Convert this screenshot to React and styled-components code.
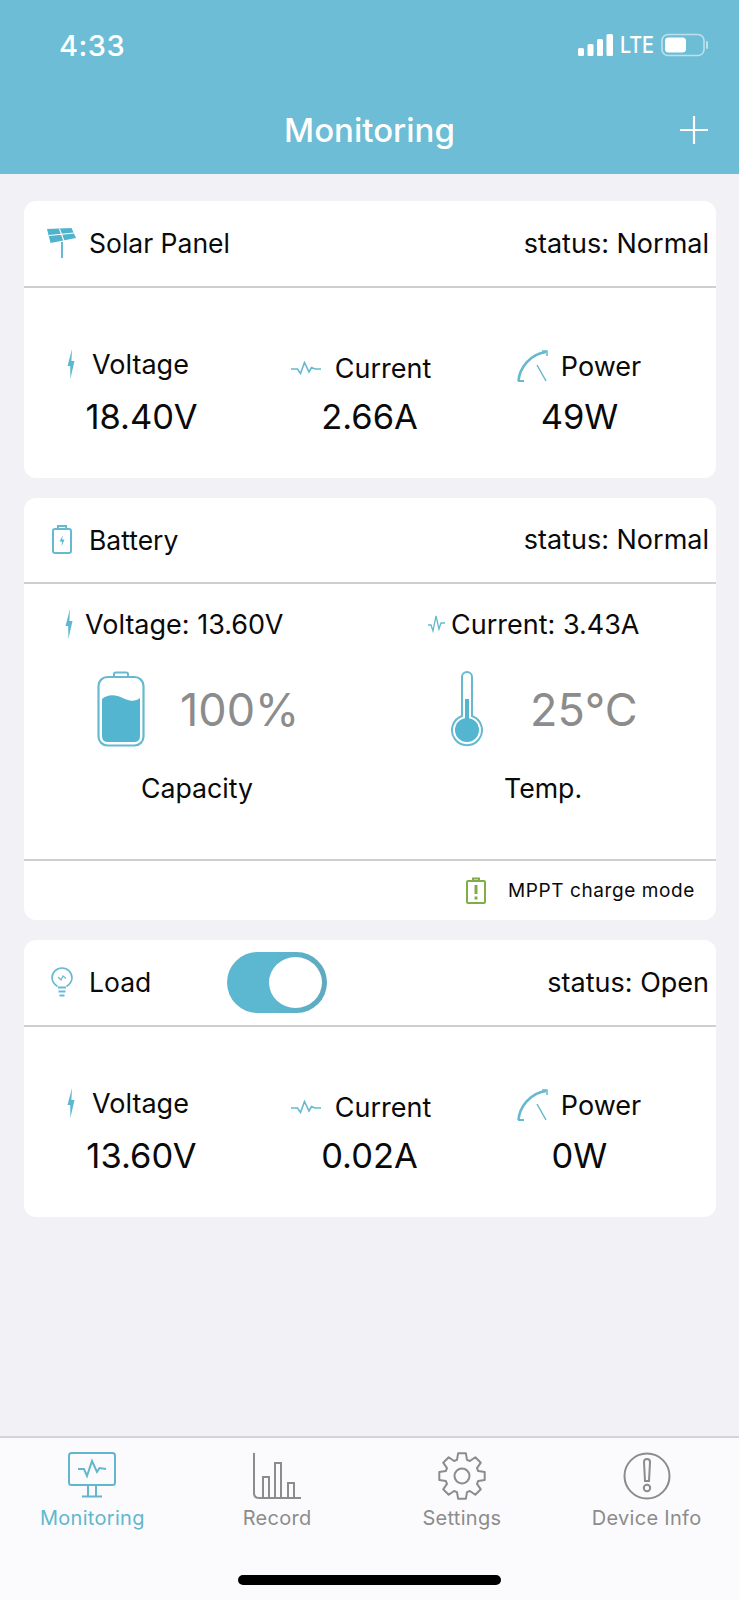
import styled, { createGlobalStyle } from "styled-components";

const TEAL = "#5cb8d0";
const ICON_LINE = "#66b9cf";
const GRAY = "#8c8c8c";

const GlobalStyle = createGlobalStyle`
  html, body {
    margin: 0;
    padding: 0;
    background: #f1f1f6;
  }
  * {
    box-sizing: border-box;
  }
`;

const Screen = styled.div`
  width: 739px;
  height: 1600px;
  display: flex;
  flex-direction: column;
  background: #f1f1f6;
  color: #0a0a0a;
  font-family: Inter, "Noto Sans", sans-serif;
  overflow: hidden;
`;

const Header = styled.header`
  height: 174px;
  flex: none;
  background: #6cbdd5;
  color: #fff;
`;

const StatusBar = styled.div`
  height: 92px;
  padding: 0 30px 2px 59px;
  display: flex;
  align-items: center;
  justify-content: space-between;
`;

const Clock = styled.span`
  font-size: 29px;
  font-weight: 500;
  letter-spacing: 0.5px;
`;

const StatusIcons = styled.div`
  display: flex;
  align-items: center;
  gap: 6px;
`;

const Network = styled.span`
  font-size: 23px;
  font-weight: 500;
  letter-spacing: -0.2px;
  transform: scaleX(0.86);
  transform-origin: left center;
  margin-right: -4px;
`;

const NavBar = styled.div`
  height: 76px;
  padding: 0 30px;
  display: grid;
  grid-template-columns: 1fr auto 1fr;
  align-items: center;
`;

const NavTitle = styled.h1`
  grid-column: 2;
  margin: 0;
  font-size: 33px;
  font-weight: 500;
`;

const AddButton = styled.div`
  grid-column: 3;
  justify-self: end;
  display: flex;
`;

const Content = styled.main`
  flex: 1;
  padding: 27px 23px 0 24px;
  display: flex;
  flex-direction: column;
  gap: 20px;
`;

const Card = styled.section`
  background: #fff;
  border-radius: 12px;
  height: ${(p) => p.$height}px;
  display: flex;
  flex-direction: column;
`;

const CardHead = styled.div`
  height: ${(p) => p.$height}px;
  flex: none;
  padding: 0 7px 1px 20px;
  display: flex;
  align-items: center;
  border-bottom: 2px solid #cfcfd1;
`;

const IconSlot = styled.div`
  width: 36px;
  margin-right: 9px;
  display: flex;
  justify-content: center;
`;

const CardTitle = styled.span`
  font-size: 26.5px;
`;

const Status = styled.span`
  margin-left: auto;
  font-size: 27px;
`;

const Toggle = styled.div`
  width: 100px;
  height: 61px;
  margin-left: 76px;
  padding: 5px;
  border-radius: 31px;
  display: flex;
  justify-content: flex-end;
  background: linear-gradient(90deg, ${TEAL} 45%, #5fa9bf 100%);
`;

const Knob = styled.div`
  width: 53px;
  height: 51px;
  border-radius: 50%;
  background: #fff;
`;

const MetricGrid = styled.div`
  padding-top: 54px;
  display: grid;
  grid-template-columns: 234px 222px 198px;
`;

const Metric = styled.div`
  display: flex;
  flex-direction: column;
  align-items: center;
`;

const MetricLabel = styled.div`
  height: 44px;
  padding-top: ${(p) => p.$drop}px;
  margin-left: ${(p) => p.$shift}px;
  display: flex;
  align-items: center;
  gap: ${(p) => p.$gap}px;
  font-size: 27px;
`;

const MetricValue = styled.div`
  margin-top: 9px;
  margin-left: 1px;
  font-size: 34.5px;
  line-height: 44px;
`;

const BatteryGrid = styled.div`
  flex: 1;
  display: grid;
  grid-template-columns: 1fr 1fr;
`;

const BatteryColumn = styled.div`
  padding-top: 20px;
  display: flex;
  flex-direction: column;
`;

const Reading = styled.div`
  height: 40px;
  padding-left: ${(p) => p.$indent}px;
  display: flex;
  align-items: center;
  gap: ${(p) => p.$gap}px;
  font-size: 27px;
`;

const Gauge = styled.div`
  margin-top: 27px;
  padding-left: ${(p) => p.$indent}px;
  display: flex;
  align-items: center;
  gap: ${(p) => p.$gap}px;
`;

const GaugeValue = styled.span`
  font-size: 45px;
  color: ${GRAY};
`;

const Caption = styled.div`
  margin-top: 22px;
  padding-left: ${(p) => p.$indent}px;
  font-size: 26.7px;
  line-height: 38px;
`;

const ChargeMode = styled.div`
  height: 61px;
  flex: none;
  padding-right: 21px;
  display: flex;
  align-items: center;
  justify-content: flex-end;
  gap: 22px;
  border-top: 2px solid #cfcfd1;
  font-size: 19px;
  letter-spacing: 0.6px;
`;

const TabBar = styled.nav`
  height: 164px;
  flex: none;
  display: flex;
  flex-direction: column;
  background: #fbfbfd;
  border-top: 2px solid #d4d4d6;
`;

const Tabs = styled.div`
  padding-top: 14px;
  display: grid;
  grid-template-columns: repeat(4, 1fr);
`;

const Tab = styled.div`
  display: flex;
  flex-direction: column;
  align-items: center;
  color: ${(p) => (p.$active ? "#62b6cd" : GRAY)};
`;

const TabLabel = styled.span`
  margin-top: 6px;
  font-size: 20px;
  letter-spacing: 0.3px;
`;

const HomeIndicator = styled.div`
  width: 263px;
  height: 10px;
  margin: auto auto 15px;
  border-radius: 5px;
  background: #000;
`;

function SignalIcon() {
  return (
    <svg width="36" height="24" viewBox="0 0 36 24" fill="#fff">
      <rect x="0" y="15" width="6" height="8" rx="1.5" />
      <rect x="9.5" y="11" width="6" height="12" rx="1.5" />
      <rect x="19" y="6" width="6" height="17" rx="1.5" />
      <rect x="28.5" y="1" width="6.5" height="22" rx="1.5" />
    </svg>
  );
}

function PhoneBattery() {
  return (
    <svg width="48" height="24" viewBox="0 0 48 24" fill="none">
      <rect x="1" y="1.5" width="42" height="21" rx="6" stroke="#fff" strokeOpacity="0.55" strokeWidth="1.6" />
      <rect x="4" y="4.5" width="21" height="15" rx="3.5" fill="#fff" />
      <path d="M46 9 v6" stroke="#fff" strokeOpacity="0.55" strokeWidth="2" strokeLinecap="round" />
    </svg>
  );
}

function PlusIcon() {
  return (
    <svg width="30" height="30" viewBox="0 0 30 30" stroke="#fff" strokeWidth="2.2">
      <path d="M15 1 V29 M1 15 H29" />
    </svg>
  );
}

function SolarIcon() {
  return (
    <svg width="30" height="30" viewBox="0 0 30 30" fill="none">
      <path d="M0 1 L24.5 0 L29 10 L3.5 15 Z" fill="#4fb3cd" />
      <path d="M2 7.5 L27 5 M12.5 1 L17 13" stroke="#fff" strokeWidth="1.1" />
      <path d="M15 14 V30" stroke={ICON_LINE} strokeWidth="2" />
    </svg>
  );
}

function BoltIcon() {
  return (
    <svg width="8" height="30" viewBox="0 0 8 30">
      <path d="M5 0 L0.5 17 H3.2 L3.4 30 L7.5 12 H4.4 Z" fill={TEAL} />
    </svg>
  );
}

function PulseIcon() {
  return (
    <svg width="30" height="14" viewBox="0 0 30 14" fill="none">
      <path d="M0 8 H6.5 L9.5 12.5 L13.5 1.5 L18 11 L20.5 6.5 L24 8 H30" stroke={ICON_LINE} strokeWidth="1.6" />
    </svg>
  );
}

function PulseTallIcon() {
  return (
    <svg width="17" height="20" viewBox="0 0 17 20" fill="none">
      <path d="M0 11 H3 L5 17 L8 2 L11 15 L13 9 H17" stroke={ICON_LINE} strokeWidth="1.3" />
    </svg>
  );
}

function PowerIcon() {
  return (
    <svg width="32" height="32" viewBox="0 0 32 32" fill="none" stroke={ICON_LINE}>
      <path d="M1.5 31 C2.5 18 13 4 29 2" strokeWidth="2.6" />
      <path d="M20 15 L29 31" strokeWidth="1.5" />
      <path d="M25 1 H30 V6" strokeWidth="1.5" />
      <path d="M1 31 H7" strokeWidth="2" />
    </svg>
  );
}

function BatteryOutlineIcon() {
  return (
    <svg width="20" height="29" viewBox="0 0 20 29" fill="none" stroke={ICON_LINE} strokeWidth="2">
      <rect x="1" y="4" width="18" height="24" rx="2" />
      <path d="M6 3.5 V1 H14 V3.5" />
      <path d="M11 10 L7.5 16.5 H10 L9.5 21.5 L12.5 14.5 H10 Z" fill={TEAL} stroke="none" />
    </svg>
  );
}

function BulbIcon() {
  return (
    <svg width="22" height="31" viewBox="0 0 22 31" fill="none" stroke={ICON_LINE}>
      <path d="M6.5 19.5 C3 17 1 14.5 1 11 A10 10 0 0 1 21 11 C21 14.5 19 17 15.5 19.5" strokeWidth="1.6" />
      <path d="M7 10 L10 13 L12 9 L15 11.5" strokeWidth="1.2" />
      <path d="M7 20.5 H15 M7.5 24.5 H14.5 M8.5 28.5 H13.5" strokeWidth="2.2" />
    </svg>
  );
}

function BatteryLevelIcon() {
  return (
    <svg width="48" height="76" viewBox="0 0 48 76" fill="none">
      <rect x="1.5" y="6" width="45" height="68.5" rx="9" stroke={ICON_LINE} strokeWidth="2.2" />
      <path d="M17 6 V3 Q17 1.5 19 1.5 H29 Q31 1.5 31 3 V6" stroke={ICON_LINE} strokeWidth="2" />
      <path d="M5 28 C12 22 20 24 28 28 C35 31 39 30 43 27 V65 Q43 71 37 71 H11 Q5 71 5 65 Z" fill="#54b5d0" />
    </svg>
  );
}

function ThermometerIcon() {
  return (
    <svg width="34" height="76" viewBox="0 0 34 76" fill="none">
      <path
        d="M12 45 V6 A5 5 0 0 1 22 6 V45 A15 15 0 1 1 12 45 Z"
        fill="#fff"
        stroke={ICON_LINE}
        strokeWidth="2"
      />
      <rect x="15" y="28" width="4" height="24" fill="#54b5d0" />
      <circle cx="17" cy="59" r="12" fill="#54b5d0" />
    </svg>
  );
}

function ChargeWarningIcon() {
  return (
    <svg width="20" height="27" viewBox="0 0 20 27" fill="none" stroke="#7fad4a">
      <rect x="1" y="4" width="18" height="22" rx="1" strokeWidth="2" />
      <path d="M7 3.5 V1.5 H13 V3.5" strokeWidth="2" />
      <path d="M10 8 V17" strokeWidth="3" />
      <path d="M10 19.5 V22.5" strokeWidth="3" />
    </svg>
  );
}

function MonitorIcon() {
  return (
    <svg width="48" height="48" viewBox="0 0 48 48" fill="none" stroke="#62b6cd" strokeWidth="2">
      <rect x="1" y="1" width="46" height="32" rx="2.5" />
      <path d="M10 17 H16 L19 24 L24 9 L29 20 L31.5 16 L38 17" />
      <path d="M20 33 V44 M28 33 V44 M14 44.5 H34" />
    </svg>
  );
}

function BarsIcon() {
  return (
    <svg width="48" height="48" viewBox="0 0 48 48" fill="none" stroke={GRAY} strokeWidth="2">
      <path d="M1 1 V41 Q1 46 6 46 H48" />
      <path d="M10 46 V25 H16 V46 M22 46 V11 H28 V46 M35 46 V31 H41 V46" />
    </svg>
  );
}

// gear outline with eight rounded teeth, computed around the centre
function GearIcon() {
  const points = [];
  for (let i = 0; i < 8; i++) {
    const a = (i * Math.PI) / 4 - Math.PI / 2;
    [
      [-0.3, 17],
      [-0.17, 23],
      [0.17, 23],
      [0.3, 17],
    ].forEach(([da, r]) => {
      points.push(`${(24 + r * Math.cos(a + da)).toFixed(1)},${(24 + r * Math.sin(a + da)).toFixed(1)}`);
    });
  }
  return (
    <svg width="48" height="48" viewBox="0 0 48 48" fill="none" stroke={GRAY} strokeWidth="2" strokeLinejoin="round">
      <polygon points={points.join(" ")} />
      <circle cx="24" cy="24" r="7.5" />
    </svg>
  );
}

function InfoIcon() {
  return (
    <svg width="48" height="48" viewBox="0 0 48 48" fill="none" stroke={GRAY} strokeWidth="2">
      <circle cx="24" cy="24" r="22.5" />
      <path d="M21 10 Q21 7 24 7 Q27 7 27 10 L26 29 H22 Z" />
      <circle cx="24" cy="36" r="3.2" />
    </svg>
  );
}

function MetricRow({ voltage, current, power }) {
  return (
    <MetricGrid>
      <Metric>
        <MetricLabel $drop={0} $shift={-26} $gap={17}>
          <BoltIcon />
          Voltage
        </MetricLabel>
        <MetricValue>{voltage}</MetricValue>
      </Metric>
      <Metric>
        <MetricLabel $drop={8} $shift={-16} $gap={14}>
          <PulseIcon />
          Current
        </MetricLabel>
        <MetricValue>{current}</MetricValue>
      </Metric>
      <Metric>
        <MetricLabel $drop={4} $shift={0} $gap={12}>
          <PowerIcon />
          Power
        </MetricLabel>
        <MetricValue>{power}</MetricValue>
      </Metric>
    </MetricGrid>
  );
}

export default function App() {
  return (
    <Screen>
      <GlobalStyle />
      <Header>
        <StatusBar>
          <Clock>4:33</Clock>
          <StatusIcons>
            <SignalIcon />
            <Network>LTE</Network>
            <PhoneBattery />
          </StatusIcons>
        </StatusBar>
        <NavBar>
          <NavTitle>Monitoring</NavTitle>
          <AddButton>
            <PlusIcon />
          </AddButton>
        </NavBar>
      </Header>

      <Content>
        <Card $height={277}>
          <CardHead $height={87}>
            <IconSlot>
              <SolarIcon />
            </IconSlot>
            <CardTitle>Solar Panel</CardTitle>
            <Status>status: Normal</Status>
          </CardHead>
          <MetricRow voltage="18.40V" current="2.66A" power="49W" />
        </Card>

        <Card $height={422}>
          <CardHead $height={86}>
            <IconSlot>
              <BatteryOutlineIcon />
            </IconSlot>
            <CardTitle>Battery</CardTitle>
            <Status>status: Normal</Status>
          </CardHead>
          <BatteryGrid>
            <BatteryColumn>
              <Reading $indent={41} $gap={12}>
                <BoltIcon />
                Voltage: 13.60V
              </Reading>
              <Gauge $indent={73} $gap={35}>
                <BatteryLevelIcon />
                <GaugeValue>100%</GaugeValue>
              </Gauge>
              <Caption $indent={117}>Capacity</Caption>
            </BatteryColumn>
            <BatteryColumn>
              <Reading $indent={58} $gap={6}>
                <PulseTallIcon />
                Current: 3.43A
              </Reading>
              <Gauge $indent={80} $gap={46}>
                <ThermometerIcon />
                <GaugeValue>25°C</GaugeValue>
              </Gauge>
              <Caption $indent={134}>Temp.</Caption>
            </BatteryColumn>
          </BatteryGrid>
          <ChargeMode>
            <ChargeWarningIcon />
            MPPT charge mode
          </ChargeMode>
        </Card>

        <Card $height={277}>
          <CardHead $height={87}>
            <IconSlot>
              <BulbIcon />
            </IconSlot>
            <CardTitle>Load</CardTitle>
            <Toggle>
              <Knob />
            </Toggle>
            <Status>status: Open</Status>
          </CardHead>
          <MetricRow voltage="13.60V" current="0.02A" power="0W" />
        </Card>
      </Content>

      <TabBar>
        <Tabs>
          <Tab $active>
            <MonitorIcon />
            <TabLabel>Monitoring</TabLabel>
          </Tab>
          <Tab>
            <BarsIcon />
            <TabLabel>Record</TabLabel>
          </Tab>
          <Tab>
            <GearIcon />
            <TabLabel>Settings</TabLabel>
          </Tab>
          <Tab>
            <InfoIcon />
            <TabLabel>Device Info</TabLabel>
          </Tab>
        </Tabs>
        <HomeIndicator />
      </TabBar>
    </Screen>
  );
}
